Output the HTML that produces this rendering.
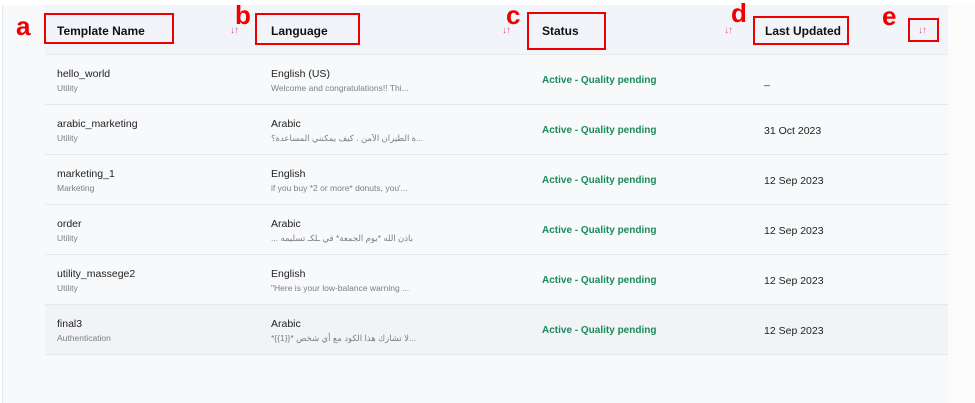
<!DOCTYPE html>
<html><head><meta charset="utf-8"><style>
*{margin:0;padding:0;box-sizing:border-box}
body{width:975px;height:403px;background:#fff;font-family:"Liberation Sans","Noto Sans CJK SC",sans-serif;position:relative;overflow:hidden}
.page{position:absolute;left:2px;top:5px;width:973px;height:398px;background:#f8f9fb;border-left:1px solid #e6e8ec}
.right{position:absolute;left:948px;top:5px;width:27px;height:398px;background:#fbfbfc}
.hdr{position:absolute;left:45px;top:5px;width:903px;height:50px;background:#f1f4f8;border-bottom:1px solid #e6e9ee}
.row{position:absolute;left:45px;width:903px;height:50px;border-bottom:1px solid #e4e7eb}
.t{position:absolute;font-size:10.5px;color:#222}
.s{position:absolute;font-size:8.5px;color:#7a7f88;white-space:nowrap}
.st{position:absolute;font-size:10px;font-weight:bold;color:#1a8a5a}
.h{position:absolute;font-size:12px;font-weight:bold;color:#111;top:24px}
.box{position:absolute;border:2px solid #e00}
.L{position:absolute;font-size:26px;font-weight:bold;color:#e00;line-height:1}
.so{position:absolute;font-size:10px;color:#e0609a;top:25px;letter-spacing:-1px}
</style></head><body>
<div class="page"></div><div class="right"></div>
<div class="hdr"></div>
<div class="h" style="left:57px">Template Name</div>
<div class="h" style="left:271px">Language</div>
<div class="h" style="left:542px">Status</div>
<div class="h" style="left:765px">Last Updated</div>
<div class="so" style="left:230px">↓↑</div>
<div class="so" style="left:502px">↓↑</div>
<div class="so" style="left:724px">↓↑</div>
<div class="so" style="left:918px">↓↑</div>
<div class="box" style="left:44px;top:13px;width:130px;height:31px"></div>
<div class="box" style="left:255px;top:13px;width:105px;height:32px"></div>
<div class="box" style="left:527px;top:12px;width:79px;height:38px"></div>
<div class="box" style="left:753px;top:16px;width:96px;height:29px"></div>
<div class="box" style="left:908px;top:18px;width:31px;height:24px"></div>
<div class="L" style="left:16px;top:13px">a</div>
<div class="L" style="left:235px;top:2px">b</div>
<div class="L" style="left:506px;top:2px">c</div>
<div class="L" style="left:731px;top:0px">d</div>
<div class="L" style="left:882px;top:3px">e</div>

<div class="row" style="top:55px"></div>
<div class="row" style="top:105px"></div>
<div class="row" style="top:155px"></div>
<div class="row" style="top:205px"></div>
<div class="row" style="top:255px"></div>
<div class="row" style="top:305px;background:#f1f3f6"></div>

<div class="t" style="left:57px;top:68px">hello_world</div><div class="s" style="left:57px;top:83px">Utility</div>
<div class="t" style="left:271px;top:68px">English (US)</div><div class="s" style="left:271px;top:83px">Welcome and congratulations!! Thi...</div>
<div class="st" style="left:542px;top:75px">Active - Quality pending</div><div class="t" style="left:764px;top:75px">_</div>

<div class="t" style="left:57px;top:118px">arabic_marketing</div><div class="s" style="left:57px;top:133px">Utility</div>
<div class="t" style="left:271px;top:118px">Arabic</div><div class="s" style="left:271px;top:133px" dir="rtl">...ة الطيران الآمن . كيف يمكنني المساعدة؟</div>
<div class="st" style="left:542px;top:125px">Active - Quality pending</div><div class="t" style="left:764px;top:125px">31 Oct 2023</div>

<div class="t" style="left:57px;top:168px">marketing_1</div><div class="s" style="left:57px;top:183px">Marketing</div>
<div class="t" style="left:271px;top:168px">English</div><div class="s" style="left:271px;top:183px">if you buy *2 or more* donuts, you'...</div>
<div class="st" style="left:542px;top:175px">Active - Quality pending</div><div class="t" style="left:764px;top:175px">12 Sep 2023</div>

<div class="t" style="left:57px;top:218px">order</div><div class="s" style="left:57px;top:233px">Utility</div>
<div class="t" style="left:271px;top:218px">Arabic</div><div class="s" style="left:271px;top:233px" dir="rtl">باذن الله *يوم الجمعة* في ـلكـ تسليمه ...</div>
<div class="st" style="left:542px;top:225px">Active - Quality pending</div><div class="t" style="left:764px;top:225px">12 Sep 2023</div>

<div class="t" style="left:57px;top:268px">utility_massege2</div><div class="s" style="left:57px;top:283px">Utility</div>
<div class="t" style="left:271px;top:268px">English</div><div class="s" style="left:271px;top:283px">"Here is your low-balance warning ...</div>
<div class="st" style="left:542px;top:275px">Active - Quality pending</div><div class="t" style="left:764px;top:275px">12 Sep 2023</div>

<div class="t" style="left:57px;top:318px">final3</div><div class="s" style="left:57px;top:333px">Authentication</div>
<div class="t" style="left:271px;top:318px">Arabic</div><div class="s" style="left:271px;top:333px">*{{1}}* لا تشارك هذا الكود مع أي شخص...</div>
<div class="st" style="left:542px;top:325px">Active - Quality pending</div><div class="t" style="left:764px;top:325px">12 Sep 2023</div>
</body></html>
